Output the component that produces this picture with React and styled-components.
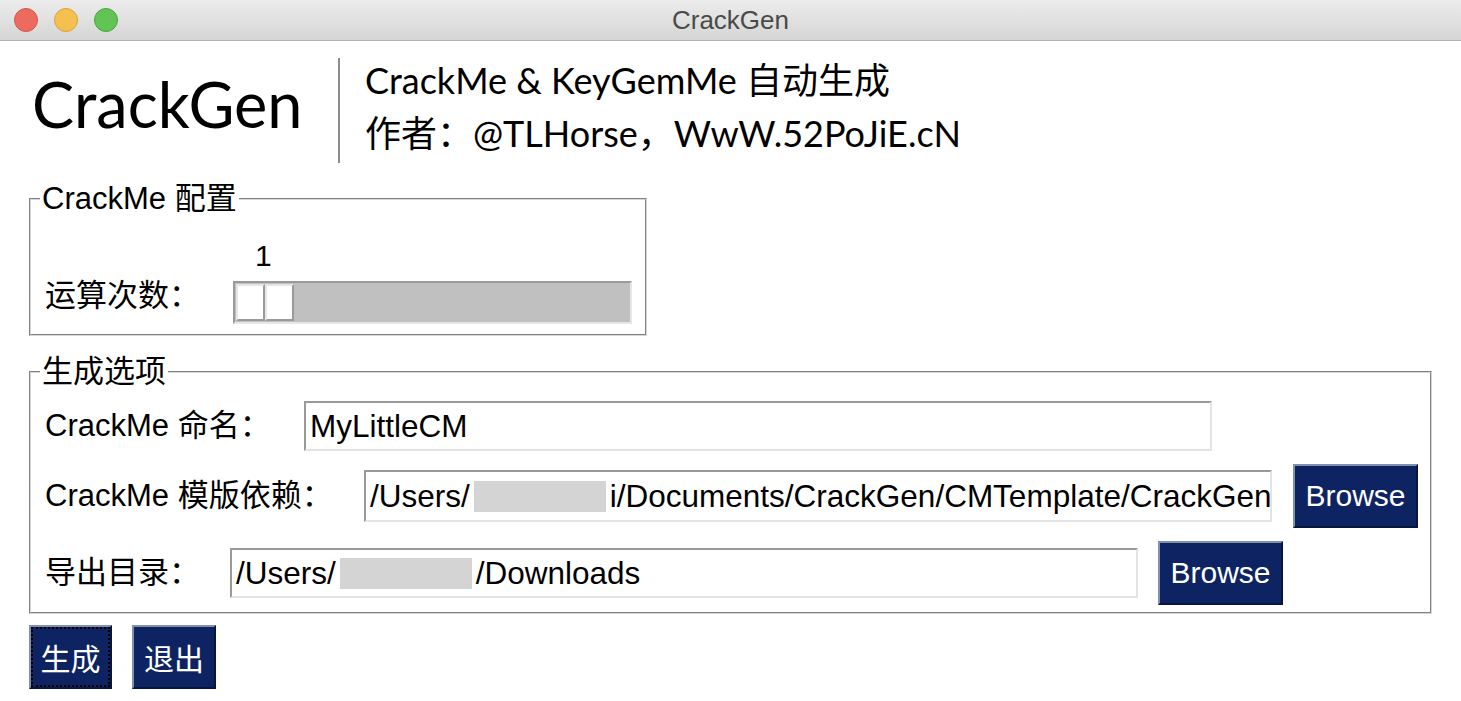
import React from 'react';
import styled, { createGlobalStyle } from 'styled-components';

const GlobalStyle = createGlobalStyle`
  html, body {
    margin: 0;
    padding: 0;
    background: #ffffff;
  }
  body {
    font-family: "Liberation Sans", "Noto Sans CJK SC", sans-serif;
    color: #000;
  }
`

const ui = `"Liberation Sans", "Noto Sans CJK SC", sans-serif`
const display = `Lato, "Noto Sans CJK SC", sans-serif`

const Window = styled.div`
  width: 1461px;
  height: 701px;
  background: #fff;
  overflow: hidden;
`

const TitleBar = styled.div`
  height: 40px;
  display: grid;
  grid-template-columns: 1fr auto 1fr;
  align-items: center;
  background: linear-gradient(#ececec, #d5d5d5);
  border-bottom: 1px solid #b1b1b1;
`

const Lights = styled.div`
  display: flex;
  gap: 16px;
  padding-left: 14px;
`

const Light = styled.span`
  width: 24px;
  height: 24px;
  border-radius: 50%;
  background: ${p => p.$bg};
  border: 1px solid ${p => p.$edge};
  box-sizing: border-box;
`

const WindowTitle = styled.div`
  font-family: ${ui};
  font-size: 26px;
  color: #4a4a4a;
`

const Content = styled.div`
  padding: 0 0 0 29px;
`

const Header = styled.div`
  display: flex;
  align-items: center;
  height: 105px;
  padding: 17px 0 0 3px;
`

const Logo = styled.div`
  font-family: ${display};
  font-size: 63px;
  line-height: 1;
  width: 306px;
  padding-bottom: 14px;
`

const Divider = styled.div`
  width: 2px;
  height: 105px;
  background: #8c8c8c;
  margin-right: 25px;
`

const Intro = styled.div`
  font-family: ${display};
  font-size: 36px;
  line-height: 53px;
  padding-bottom: 8px;
`

const Group = styled.fieldset`
  width: ${p => p.$w}px;
  box-sizing: border-box;
  margin: ${p => p.$top}px 0 0 0;
  padding: ${p => p.$pad};
  border: 2px groove #d6d6d6;
  min-inline-size: 0;
`

const Legend = styled.legend`
  font-family: ${ui};
  font-size: 31px;
  line-height: 30px;
  padding: 0 2px;
  margin-left: -5px;
`

const ScaleRow = styled.div`
  display: flex;
  align-items: flex-end;
  margin-top: ${p => p.$top}px;
`

const Label = styled.div`
  font-family: ${ui};
  font-size: 31px;
  line-height: 30px;
  width: ${p => p.$w}px;
  flex: none;
  white-space: nowrap;
  margin-bottom: ${p => p.$mb || 0}px;
`

const Scale = styled.div`
  display: flex;
  flex-direction: column;
`

const ScaleValue = styled.div`
  font-family: ${ui};
  font-size: 30px;
  line-height: 30px;
  padding-left: ${p => p.$x}px;
  margin-bottom: 10px;
`

const Trough = styled.div`
  width: 399px;
  height: 43px;
  box-sizing: border-box;
  background: #c0c0c0;
  border: 2px solid;
  border-color: #9a9a9a #e6e6e6 #e6e6e6 #9a9a9a;
  padding: 1px;
  display: flex;
`

const Thumb = styled.div`
  display: flex;
  height: 100%;
`

const ThumbHalf = styled.div`
  width: 29px;
  box-sizing: border-box;
  background: #fff;
  border: 2px solid;
  border-color: #e6e6e6 #9a9a9a #9a9a9a #e6e6e6;
`

const Rows = styled.div`
  display: flex;
  flex-direction: column;
  gap: 13px;
`

const Row = styled.div`
  display: flex;
  align-items: center;
  height: ${p => p.$h}px;
`

const Entry = styled.div`
  width: 908px;
  height: ${p => p.$h || 50}px;
  box-sizing: border-box;
  border: 2px solid;
  border-color: #9a9a9a #e4e4e4 #e4e4e4 #9a9a9a;
  padding: 0 4px;
  display: flex;
  align-items: center;
  font-family: ${ui};
  font-size: 31.5px;
  white-space: nowrap;
  overflow: hidden;
  flex: none;
`

const Redacted = styled.span`
  display: inline-block;
  width: 132px;
  height: 31px;
  background: #d4d4d4;
  margin: 0 4px;
  flex: none;
`

const NavyButton = styled.button`
  width: ${p => p.$w}px;
  height: 64px;
  flex: none;
  box-sizing: border-box;
  margin-left: ${p => p.$ml || 0}px;
  padding: 0;
  background: #0e2462;
  color: #fff;
  font-family: ${ui};
  font-size: 30px;
  border: 2px solid;
  border-color: #8290b0 #06163f #06163f #8290b0;
  outline: ${p => (p.$focus ? '2px dotted #000' : 'none')};
  outline-offset: -4px;
  cursor: pointer;
`

const Actions = styled.div`
  display: flex;
  gap: 20px;
  margin-top: 11px;
`

export default function App() {
  return (
    <Window>
      <GlobalStyle />
      <TitleBar>
        <Lights>
          <Light $bg="#ed6a5e" $edge="#d5544a" />
          <Light $bg="#f5c04f" $edge="#d9a33c" />
          <Light $bg="#61c454" $edge="#4ca73f" />
        </Lights>
        <WindowTitle>CrackGen</WindowTitle>
        <div />
      </TitleBar>

      <Content>
        <Header>
          <Logo>CrackGen</Logo>
          <Divider />
          <Intro>
            <div>CrackMe &amp; KeyGemMe 自动生成</div>
            <div>作者：@TLHorse，WwW.52PoJiE.cN</div>
          </Intro>
        </Header>

        <Group $w={618} $top={21} $pad="0 12px 10px 14px">
          <Legend>CrackMe 配置</Legend>
          <ScaleRow $top={27}>
            <Label $w={188} $mb={13}>运算次数：</Label>
            <Scale>
              <ScaleValue $x={22}>1</ScaleValue>
              <Trough>
                <Thumb>
                  <ThumbHalf />
                  <ThumbHalf />
                </Thumb>
              </Trough>
            </Scale>
          </ScaleRow>
        </Group>

        <Group $w={1403} $top={21} $pad="14px 12px 7px 14px">
          <Legend>生成选项</Legend>
          <Rows>
            <Row $h={50}>
              <Label $w={259}>CrackMe 命名：</Label>
              <Entry>MyLittleCM</Entry>
            </Row>
            <Row $h={64}>
              <Label $w={319}>CrackMe 模版依赖：</Label>
              <Entry $h={52}>
                /Users/<Redacted />i/Documents/CrackGen/CMTemplate/CrackGen
              </Entry>
              <NavyButton $w={125} $ml={21}>Browse</NavyButton>
            </Row>
            <Row $h={64}>
              <Label $w={185}>导出目录：</Label>
              <Entry>
                /Users/<Redacted />/Downloads
              </Entry>
              <NavyButton $w={125} $ml={20}>Browse</NavyButton>
            </Row>
          </Rows>
        </Group>

        <Actions>
          <NavyButton $w={83} $focus>生成</NavyButton>
          <NavyButton $w={84}>退出</NavyButton>
        </Actions>
      </Content>
    </Window>
  );
}
